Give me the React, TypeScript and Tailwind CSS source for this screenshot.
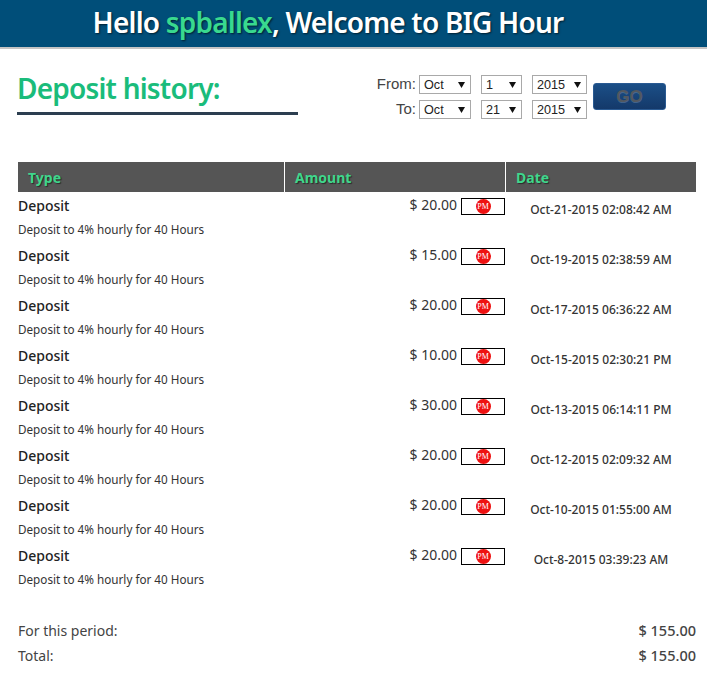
const deposits = [
    { amount: '$ 20.00', date: 'Oct-21-2015 02:08:42 AM' },
    { amount: '$ 15.00', date: 'Oct-19-2015 02:38:59 AM' },
    { amount: '$ 20.00', date: 'Oct-17-2015 06:36:22 AM' },
    { amount: '$ 10.00', date: 'Oct-15-2015 02:30:21 PM' },
    { amount: '$ 30.00', date: 'Oct-13-2015 06:14:11 PM' },
    { amount: '$ 20.00', date: 'Oct-12-2015 02:09:32 AM' },
    { amount: '$ 20.00', date: 'Oct-10-2015 01:55:00 AM' },
    { amount: '$ 20.00', date: 'Oct-8-2015 03:39:23 AM' },
];

function FakeSelect({ value, width }: { value: string; width: string }) {
    return (
        <div className={`${width} h-[19px] flex items-center justify-between border border-[#a9a9a9] bg-white pl-[4px] pr-[5px] font-['Liberation_Sans',sans-serif] text-[13.3px] text-[#222]`}>
            <span className="inline-block scale-x-[0.95] origin-left">{value}</span>
            <svg width="7" height="6" viewBox="0 0 7 6"><path d="M0 0h7L3.5 6z" fill="#111" /></svg>
        </div>
    );
}

function DateRow({ label, month, day, year }: { label: string; month: string; day: string; year: string }) {
    return (
        <div className="flex items-center h-[19px]">
            <span className="w-[58px] text-right pr-[3px] font-['Liberation_Sans',sans-serif] text-[15px] text-[#444]">{label}</span>
            <FakeSelect value={month} width="w-[52px]" />
            <div className="w-[10px]" />
            <FakeSelect value={day} width="w-[41px]" />
            <div className="w-[10px]" />
            <FakeSelect value={year} width="w-[55px]" />
        </div>
    );
}

export default function App() {
    return (
        <div className="w-[707px] h-[676px] bg-white overflow-hidden font-['Noto_Sans',sans-serif] text-[#333]">
            <div className="h-[49px] bg-[#004e79] border-b-2 border-[#c4c4c4] flex items-center justify-center pb-[3px] pr-[51px]">
                <h1 className="text-[28px] font-semibold text-white tracking-[-0.8px] [text-shadow:1px_1px_2px_rgba(0,0,0,0.6)]">
                    Hello <span className="text-[#39d98f]">spballex</span>, Welcome to BIG Hour
                </h1>
            </div>

            <div className="flex justify-between pl-[17px] pr-[41px] pt-[20px] h-[113px]">
                <div className="w-[281px] h-[46px] border-b-[3px] border-[#2c3e50]">
                    <h2 className="text-[28px] leading-[38px] font-semibold text-[#1abc7b] tracking-[-0.8px]">Deposit history:</h2>
                </div>
                <div className="flex items-center self-start pt-[6px]">
                    <div className="flex flex-col gap-[6px]">
                        <DateRow label="From:" month="Oct" day="1" year="2015" />
                        <DateRow label="To:" month="Oct" day="21" year="2015" />
                    </div>
                    <button className="ml-[6px] mb-[1px] w-[73px] h-[27px] rounded-[3px] bg-gradient-to-b from-[#1b4f87] to-[#14396a] border border-[#2a5a92] font-['Liberation_Sans',sans-serif] text-[17px] leading-none font-bold text-[#525860] [text-shadow:0_1px_0_rgba(255,255,255,0.2)]">GO</button>
                </div>
            </div>

            <div className="ml-[18px] w-[678px]">
                <div className="grid grid-cols-[266px_220px_190px] gap-x-px h-[30px] bg-white">
                    {['Type', 'Amount', 'Date'].map((col) => (
                        <div key={col} className="bg-[#555555] pl-[10px] flex items-center text-[14px] font-bold text-[#3fd68c] [text-shadow:1px_1px_1px_rgba(0,0,0,0.5)]">{col}</div>
                    ))}
                </div>
                {deposits.map((d, i) => (
                    <div key={i} className="grid grid-cols-[266px_220px_190px] gap-x-px h-[50px] text-[#333]">
                        <div>
                            <div className="text-[14px] leading-[28px] font-medium text-[#222]">Deposit</div>
                            <div className="text-[11.7px] leading-[18px]">Deposit to 4% hourly for 40 Hours</div>
                        </div>
                        <div className="flex justify-end items-start pt-[3px]">
                            <span className="text-[14px] leading-[20px] mr-[4px]">{d.amount}</span>
                            <div className="mt-[3px] w-[44px] h-[17px] border border-black flex items-center justify-center">
                                <div className="w-[15px] h-[15px] rounded-full bg-[#ee1111] flex items-center justify-center font-['Liberation_Serif',serif] text-[8px] text-white">PM</div>
                            </div>
                        </div>
                        <div className="text-center pt-[8px] text-[12px] leading-[20px] font-medium text-[#333]">{d.date}</div>
                    </div>
                ))}

                <div className="mt-[26px] text-[14px] text-[#444]">
                    <div className="flex justify-between h-[25px] items-center">
                        <span>For this period:</span>
                        <span className="font-medium text-[14.5px]">$ 155.00</span>
                    </div>
                    <div className="flex justify-between h-[25px] items-center">
                        <span>Total:</span>
                        <span className="font-medium text-[14.5px]">$ 155.00</span>
                    </div>
                </div>
            </div>
        </div>
    );
}
